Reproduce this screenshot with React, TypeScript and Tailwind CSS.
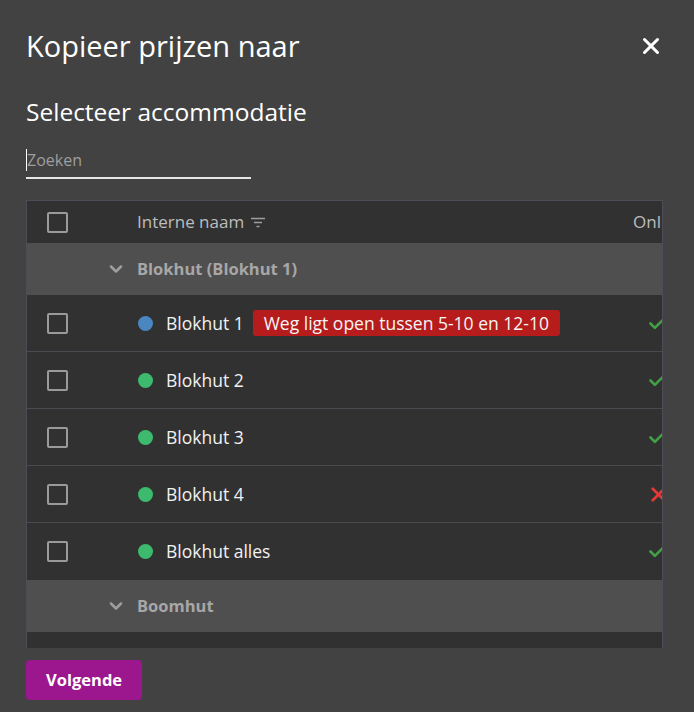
import { ChevronDown, Check, X } from "lucide-react";

type Row = { name: string; color: string; ok: boolean; note?: string };

const blokhut: Row[] = [
  { name: "Blokhut 1", color: "bg-[#4a86c0]", ok: true, note: "Weg ligt open tussen 5-10 en 12-10" },
  { name: "Blokhut 2", color: "bg-[#3dba6e]", ok: true },
  { name: "Blokhut 3", color: "bg-[#3dba6e]", ok: true },
  { name: "Blokhut 4", color: "bg-[#3dba6e]", ok: false },
  { name: "Blokhut alles", color: "bg-[#3dba6e]", ok: true },
];

function Box() {
  return <div className="w-[21px] h-[21px] rounded-[2px] border-2 border-[#9a9a9a]" />;
}

function FilterIcon() {
  return (
    <svg width="16" height="12" viewBox="0 0 16 12" className="ml-[6px] mb-[6px]">
      <path d="M1 1.5h14M4 5.5h8M6.5 9.5h3" stroke="#9e9e9e" strokeWidth="1.6" />
    </svg>
  );
}

function Group({ label }: { label: string }) {
  return (
    <div className="flex items-center h-[52px] bg-[#504f50]">
      <div className="w-[79px] shrink-0" />
      <ChevronDown size={20} strokeWidth={3} className="text-[#9e9e9e]" />
      <span className="ml-[11px] text-[16.5px] font-bold text-[#a7a7a7]">{label}</span>
    </div>
  );
}

function DataRow({ row, last }: { row: Row; last?: boolean }) {
  return (
    <div className={`flex items-center h-[57px] bg-[#313131] ${last ? "" : "border-b border-[#4b4a50]"}`}>
      <div className="w-[110px] shrink-0 pl-[20px]">
        <Box />
      </div>
      <div className="w-[496px] shrink-0 flex items-center">
        <span className={`w-[15px] h-[15px] rounded-full ml-[1px] ${row.color}`} />
        <span className="ml-[13px] text-[17.5px] text-[#f2f2f2]">{row.name}</span>
        {row.note && (
          <span className="ml-[9px] h-[26px] px-[11px] flex items-center rounded-[3px] bg-[#b71c1c] text-[17.5px] text-[#f5f5f5]">
            {row.note}
          </span>
        )}
      </div>
      <div className="w-[200px] shrink-0 pl-[14px]">
        {row.ok ? (
          <Check size={21} strokeWidth={3} className="text-[#43a047]" />
        ) : (
          <X size={23} strokeWidth={2.8} className="text-[#e53935]" />
        )}
      </div>
    </div>
  );
}

export default function App() {
  return (
    <div
      className="h-[712px] w-[694px] bg-[#424242] flex flex-col px-[26px] overflow-hidden"
      style={{ fontFamily: '"Open Sans", "Noto Sans", sans-serif' }}
    >
      <div className="flex items-center justify-between pt-[26px] h-[66px]">
        <h1 className="text-[29px] text-white leading-[40px]">Kopieer prijzen naar</h1>
        <X size={26} strokeWidth={2.8} className="text-white mr-[4px]" />
      </div>
      <h2 className="mt-[30px] text-[24.5px] text-white leading-[32px]">Selecteer accommodatie</h2>
      <div className="mt-[21px] w-[225px] border-b-2 border-[#e6e6e6] pb-[6px] flex items-center">
        <span className="w-px h-[22px] bg-white" />
        <span className="text-[16px] text-[#9e9e9e] leading-[22px]">Zoeken</span>
      </div>
      <div className="mt-[21px] h-[448px] w-[637px] border-l border-t border-r border-[#4e4d55] overflow-hidden">
        <div className="w-[900px]">
          <div className="flex items-center h-[42px] bg-[#313131]">
            <div className="w-[110px] shrink-0 pl-[20px]">
              <Box />
            </div>
            <div className="w-[496px] shrink-0 flex items-end">
              <span className="text-[17px] text-[#bdbdbd]">Interne naam</span>
              <FilterIcon />
            </div>
            <span className="text-[17px] text-[#bdbdbd]">Online</span>
          </div>
          <Group label="Blokhut (Blokhut 1)" />
          {blokhut.map((r, i) => (
            <DataRow key={r.name} row={r} last={i === blokhut.length - 1} />
          ))}
          <Group label="Boomhut" />
          <DataRow row={{ name: "Boomhut 1", color: "bg-[#3dba6e]", ok: true }} />
        </div>
      </div>
      <div className="mt-[12px]">
        <button className="h-[40px] px-[20px] rounded-[4px] bg-[#9c168e] text-white text-[16.5px] font-bold">
          Volgende
        </button>
      </div>
    </div>
  );
}
